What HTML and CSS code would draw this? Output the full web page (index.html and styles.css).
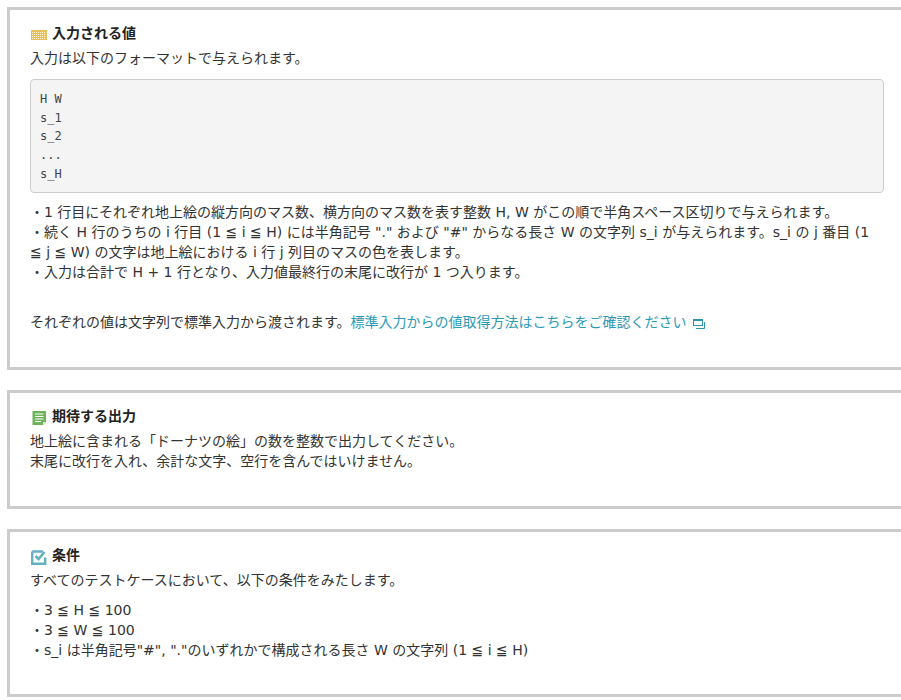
FILE: index.html
```html
<!DOCTYPE html>
<html lang="ja">
<head>
<meta charset="utf-8">
<title>入力される値</title>
<link rel="stylesheet" href="styles.css">
</head>
<body>
<section class="card card-input">
  <h2 class="title">
    <svg class="icon" width="16" height="16" viewBox="0 0 16 16"><rect x="0" y="3" width="16" height="10" fill="#e8bf5e"/><path d="M1 5.500h14M1 7.500h14M1 9.500h14M1 11.500h14" stroke="#fdf3cf" stroke-width="1" stroke-dasharray="1 1"/></svg>
    入力される値
  </h2>
  <p class="lead">入力は以下のフォーマットで与えられます。</p>
  <pre class="code">H W
s_1
s_2
...
s_H</pre>
  <ul class="lines">
    <li>・1 行目にそれぞれ地上絵の縦方向のマス数、横方向のマス数を表す整数 H, W がこの順で半角スペース区切りで与えられます。</li>
    <li>・続く H 行のうちの i 行目 (1 ≦ i ≦ H) には半角記号 "." および "#" からなる長さ W の文字列 s_i が与えられます。s_i の j 番目 (1 ≦ j ≦ W) の文字は地上絵における i 行 j 列目のマスの色を表します。</li>
    <li>・入力は合計で H + 1 行となり、入力値最終行の末尾に改行が 1 つ入ります。</li>
  </ul>
  <p class="note">それぞれの値は文字列で標準入力から渡されます。<a class="link" href="#">標準入力からの値取得方法はこちらをご確認ください<svg class="ext" width="12" height="10" viewBox="0 0 12 10"><rect x="0.5" y="0.5" width="9" height="6" fill="none" stroke="#2b93ad"/><path d="M0.5 1.500h9" stroke="#2b93ad"/><path d="M11.500 3v6.500H3" fill="none" stroke="#2b93ad"/></svg></a></p>
</section>
<section class="card card-output">
  <h2 class="title">
    <svg class="icon" width="16" height="16" viewBox="0 0 16 16"><path d="M1.500 1h13.500v11l-3 3H1.500z" fill="#6eb35a"/><path d="M4 4h8.500M4 6.500h8.500M4 9h8.500M4 11.500h6" stroke="#fff"/><path d="M12 15v-3h3z" fill="#dcecd4"/></svg>
    期待する出力
  </h2>
  <p class="body">地上絵に含まれる「ドーナツの絵」の数を整数で出力してください。<br>末尾に改行を入れ、余計な文字、空行を含んではいけません。</p>
</section>
<section class="card card-cond">
  <h2 class="title">
    <svg class="icon" width="16" height="16" viewBox="0 0 16 16"><path d="M1.200 2.500h10.800M1.200 2.500v12.300h13V8.500" fill="none" stroke="#66b0c4" stroke-width="2.400"/><path d="M4.500 7l3 3 6-7" fill="none" stroke="#66b0c4" stroke-width="2.600"/></svg>
    条件
  </h2>
  <p class="lead lead-cond">すべてのテストケースにおいて、以下の条件をみたします。</p>
  <ul class="lines">
    <li>・3 ≦ H ≦ 100</li>
    <li>・3 ≦ W ≦ 100</li>
    <li>・s_i は半角記号"#", "."のいずれかで構成される長さ W の文字列 (1 ≦ i ≦ H)</li>
  </ul>
</section>
</body>
</html>
```

FILE: styles.css
```css
html, body {
  margin: 0;
  padding: 0;
  overflow: hidden;
  background: #fff;
}
body {
  padding: 7px 0 0 7px;
  width: 894px;
  color: #333;
  font-family: "DejaVu Sans", "Noto Sans CJK JP", sans-serif;
  font-size: 14px;
  line-height: 20px;
}
.card {
  box-sizing: border-box;
  width: 900px;
  border: 3px solid #ccc;
  padding: 13px 20px 0;
  margin-bottom: 20px;
}
.card-input { height: 363px; }
.card-output { height: 119px; }
.card-cond { height: 168px; }
.title {
  display: flex;
  align-items: center;
  gap: 5px;
  margin: 0 0 5px;
  font-size: 14px;
  line-height: 20px;
  font-weight: 700;
  color: #222;
}
.icon { flex: none; margin: 4px 0 0 1px; }
.lead, .body, .note { margin: 0; }
.lead-cond { margin-bottom: 10px; }
.code {
  margin: 11px 0 9px;
  padding: 10px 9px;
  height: 114px;
  box-sizing: border-box;
  background: #f4f4f4;
  border: 1px solid #ccc;
  border-radius: 4px;
  color: #444;
  font-family: "DejaVu Sans Mono", monospace;
  font-size: 12px;
  line-height: 18.7px;
}
.lines {
  margin: 0;
  padding: 0;
  list-style: none;
}
.note { margin-top: 30px; }
.link {
  color: #2b9ab8;
  text-decoration: none;
}
.ext { margin-left: 6px; vertical-align: -2px; }
```
